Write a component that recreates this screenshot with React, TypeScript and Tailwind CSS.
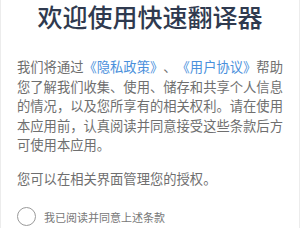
import React from "react";

const App: React.FC = () => {
    return (
        <div
            className="w-[300px] h-[228px] bg-white border-x border-[#ececec] overflow-hidden [text-spacing-trim:space-all]"
            style={{ fontFamily: '"Noto Sans CJK SC", "Noto Sans", sans-serif' }}
        >
            <h1 className="text-center text-[25px] leading-[32px] font-medium text-[#2f3a4f]">
                欢迎使用快速翻译器
            </h1>

            <div className="px-[16px] mt-[25px] text-[13.3px] leading-[19.5px] text-[#6f6f6f]">
                <p>
                    我们将通过<span className="text-[#4a90dc]">《隐私政策》</span>、<span className="text-[#4a90dc]">《用户协议》</span>帮助您了解我们收集、使用、储存和共享个人信息的情况，以及您所享有的相关权利。请在使用本应用前，认真阅读并同意接受这些条款后方可使用本应用。
                </p>
                <p className="mt-[14px]">您可以在相关界面管理您的授权。</p>
            </div>

            <label className="flex items-center gap-[8px] pl-[16px] mt-[19px]">
                <span className="w-[19px] h-[19px] rounded-full border border-[#9a9a9a]" />
                <span className="text-[11px] leading-[16px] text-[#777777]">我已阅读并同意上述条款</span>
            </label>
        </div>
    );
};

export default App;
